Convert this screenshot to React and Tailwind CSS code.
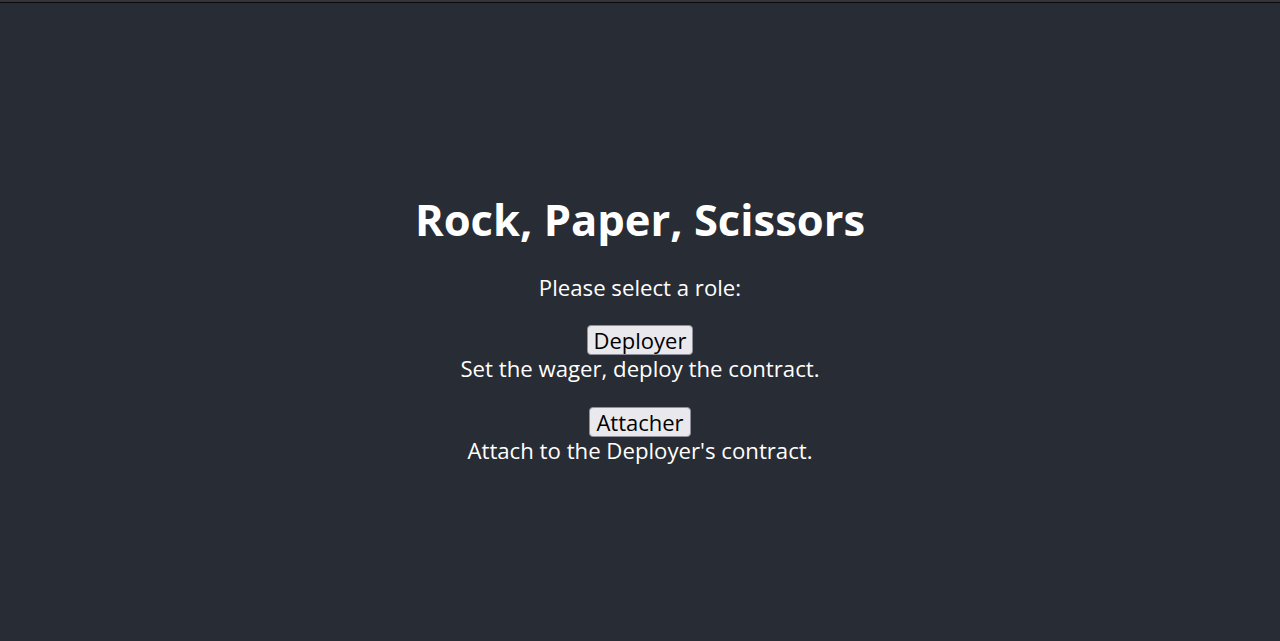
export default function App() {
  return (
    <div className="min-h-[641px] bg-[#282c34] text-white flex flex-col" style={{ fontFamily: '"Open Sans", "Noto Sans", sans-serif' }}>
      <div className="h-[2px] bg-[#35343a]" />
      <div className="h-[1px] bg-[#0a0a0c]" />
      <div className="flex flex-col items-center text-center text-[22.2px] pt-[191px]">
        <h1 className="text-[43.5px] leading-[52px] font-bold">Rock, Paper, Scissors</h1>
        <div className="mt-[29px] leading-[26px]">Please select a role:</div>
        <div className="mt-[24px] flex flex-col items-center">
          <button className="h-[30px] px-[6px] text-[22px] leading-[26px] text-black bg-[#e9e9ed] border border-[#8f8f9d] rounded-[4px]">Deployer</button>
          <div className="leading-[28px]">Set the wager, deploy the contract.</div>
        </div>
        <div className="mt-[24px] flex flex-col items-center">
          <button className="h-[30px] px-[6px] text-[22px] leading-[26px] text-black bg-[#e9e9ed] border border-[#8f8f9d] rounded-[4px]">Attacher</button>
          <div className="leading-[28px]">Attach to the Deployer's contract.</div>
        </div>
      </div>
    </div>
  );
}
